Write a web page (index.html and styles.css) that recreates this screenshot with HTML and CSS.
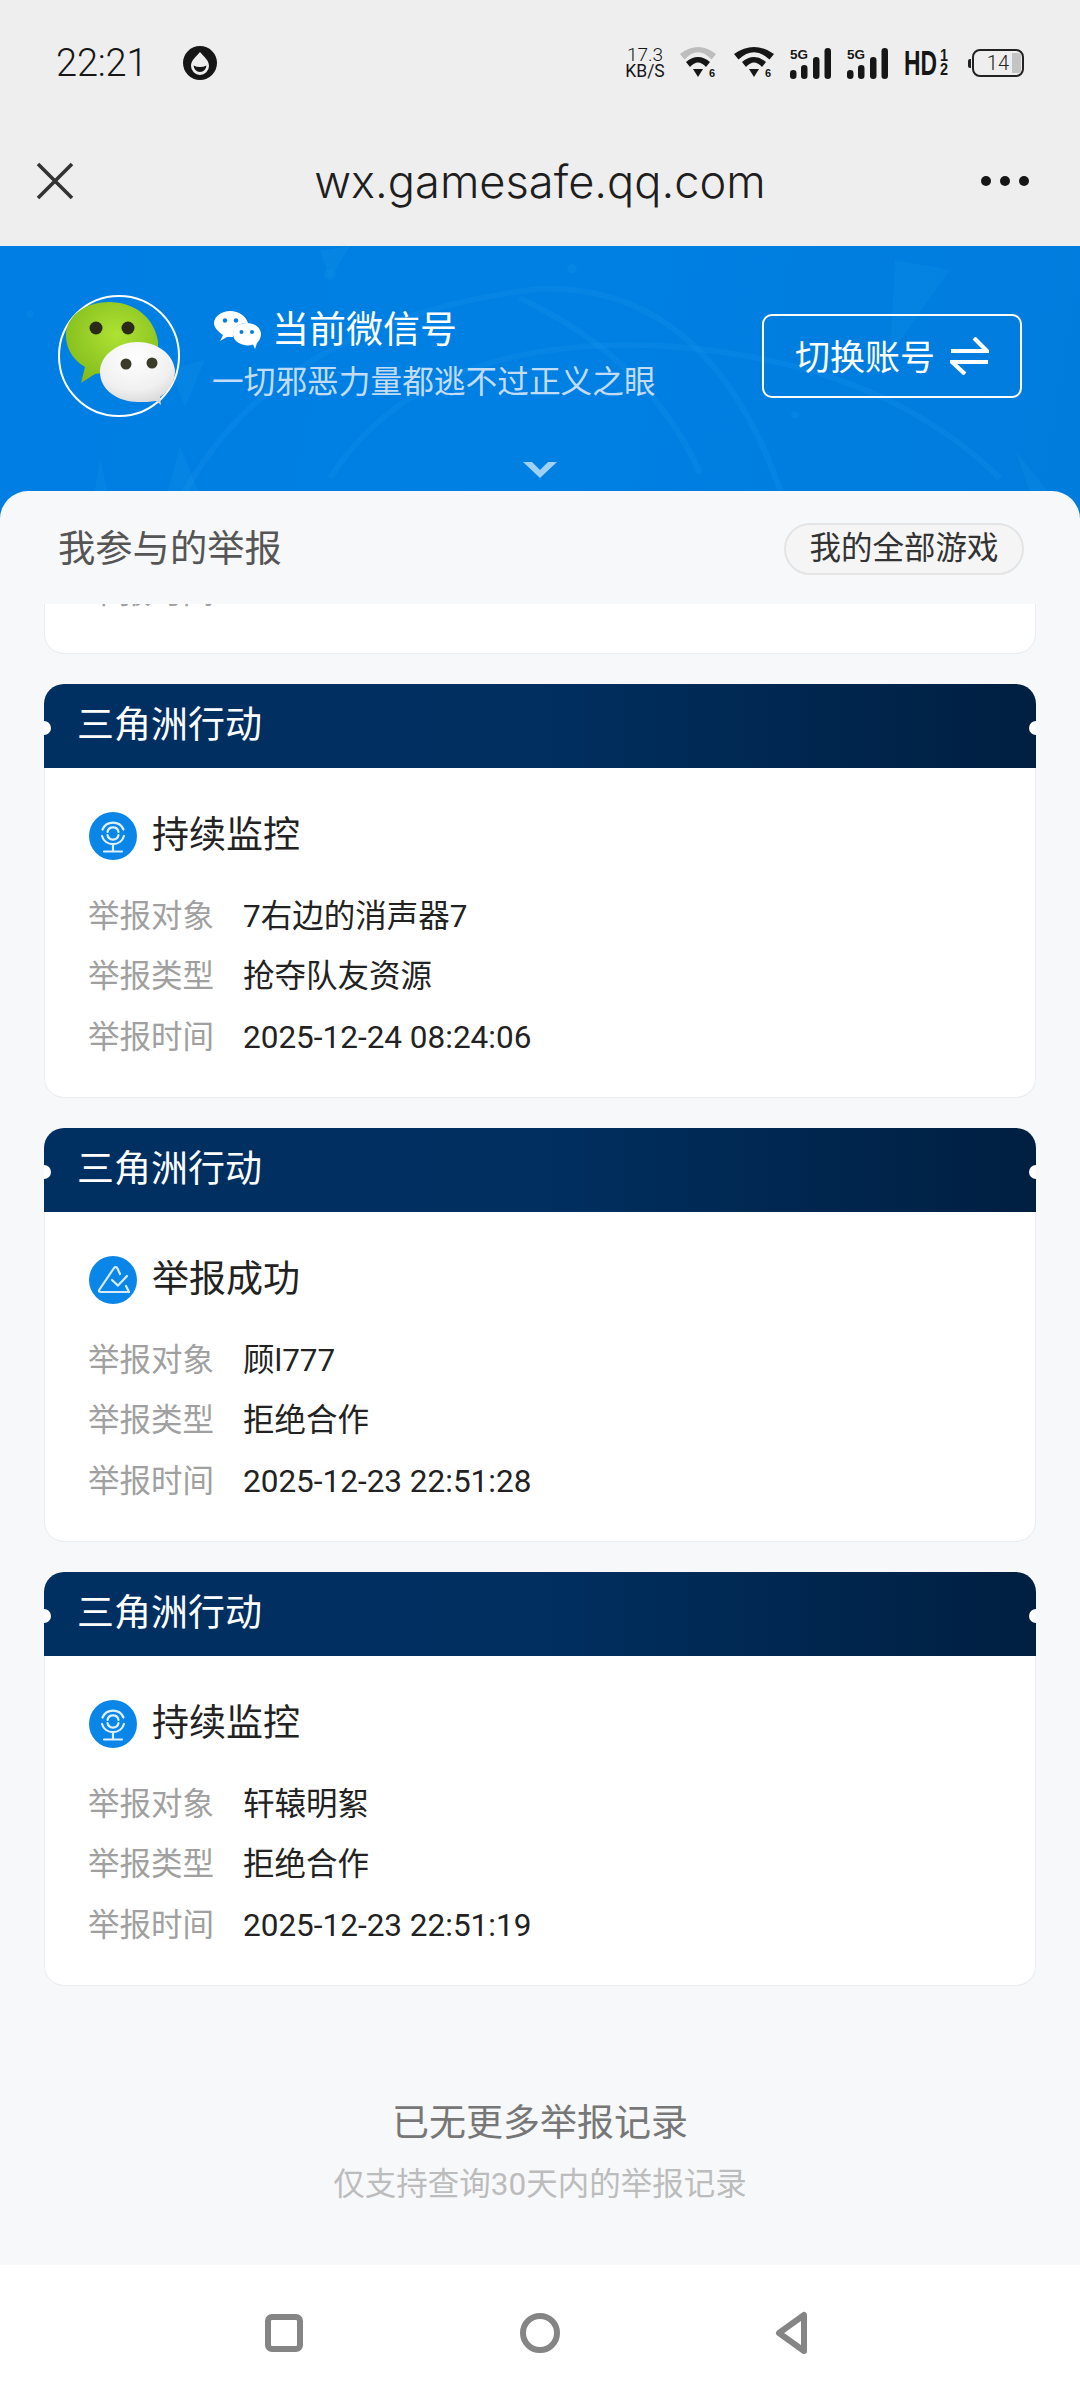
FILE: index.html
```html
<!DOCTYPE html>
<html lang="zh">
<head>
<meta charset="utf-8">
<title>wx.gamesafe.qq.com</title>
<link rel="stylesheet" href="styles.css">
</head>
<body>
<svg class="defs" width="0" height="0" aria-hidden="true">
  <defs>
    <symbol id="wifi-a" viewBox="0 0 40 30">
      <path d="M2 7 Q20 -7 38 7 L33.500 12.500 Q20 -2 6.500 12.500Z" fill="#bdbdbd"/>
      <path d="M8 15 Q20 5 32 15 L28 20 Q20 11 12 20Z" fill="#161616"/>
      <path d="M15 22 H25 L20 30Z" fill="#161616"/>
      <text x="31" y="30" class="tiny6">6</text>
    </symbol>
    <symbol id="wifi-b" viewBox="0 0 40 30">
      <path d="M0 7 Q20 -7 40 7 L35.500 12.500 Q20 -2 4.500 12.500Z" fill="#161616"/>
      <path d="M8 15 Q20 5 32 15 L28 20 Q20 11 12 20Z" fill="#161616"/>
      <path d="M15 22 H25 L20 30Z" fill="#161616"/>
      <text x="31" y="30" class="tiny6">6</text>
    </symbol>
    <symbol id="signal" viewBox="0 0 41 31">
      <text x="0" y="11" class="tiny5g" textLength="18" lengthAdjust="spacingAndGlyphs">5G</text>
      <rect x="0" y="22" width="6.500" height="9" rx="3.200" fill="#161616"/>
      <rect x="11" y="17" width="6.500" height="14" rx="3.200" fill="#161616"/>
      <rect x="23" y="9" width="6.500" height="22" rx="3.200" fill="#161616"/>
      <rect x="34.500" y="0" width="6.500" height="31" rx="3.200" fill="#161616"/>
    </symbol>
    <symbol id="icon-monitor" viewBox="0 0 48 48">
      <circle cx="24" cy="24" r="24" fill="#0a85e8"/>
      <g fill="none" stroke="#dff0fd" stroke-width="2.200" stroke-linecap="round">
        <path d="M13.500 17.500 A11.500 11.500 0 0 1 34.500 17.500"/>
        <path d="M35 24 A11.500 11.500 0 0 1 13 24"/>
        <path d="M18.500 20 A5.600 5.600 0 0 1 29.500 20"/>
        <path d="M29.500 23 A5.600 5.600 0 0 1 18.500 23"/>
        <path d="M24 33 V39 M15 39.500 H33"/>
      </g>
    </symbol>
    <symbol id="icon-success" viewBox="0 0 48 48">
      <circle cx="24" cy="24" r="24" fill="#0a85e8"/>
      <g fill="none" stroke="#d5ebfc" stroke-width="2.200" stroke-linecap="round" stroke-linejoin="round">
        <path d="M40 36 H12 Q9 36 10.500 33.500 L25 12 Q27 10 28.500 12.500 L31 18"/>
        <path d="M40 36 L37 30"/>
        <path d="M23 24 L29 29.600 L38 20"/>
      </g>
    </symbol>
  </defs>
</svg>

<header class="chrome">
  <div class="status">
    <div class="status-left">
      <span class="time">22:21</span>
      <svg class="drop" viewBox="0 0 34 34"><circle cx="17" cy="17" r="17" fill="#161616"/><path d="M17 6 C21 11 26 14 26 20 A9 9 0 0 1 8 20 C8 14 13 11 17 6Z" fill="#eee"/><path d="M10.500 19.500 Q17 22.500 23.500 19.500 Q22.500 26 17 26 Q11.500 26 10.500 19.500Z" fill="#161616"/></svg>
    </div>
    <div class="status-right">
      <div class="speed"><span class="speed-num">17.3</span><span class="speed-unit">KB/S</span></div>
      <svg class="wifi"><use href="#wifi-a"/></svg>
      <svg class="wifi"><use href="#wifi-b"/></svg>
      <svg class="signal"><use href="#signal"/></svg>
      <svg class="signal"><use href="#signal"/></svg>
      <svg class="hd" viewBox="0 -8 45 43">
        <text x="0" y="26" class="hd-text" textLength="33" lengthAdjust="spacingAndGlyphs">HD</text>
        <text x="36" y="11.500" class="hd-small" textLength="8" lengthAdjust="spacingAndGlyphs">1</text>
        <text x="36" y="26" class="hd-small" textLength="8" lengthAdjust="spacingAndGlyphs">2</text>
      </svg>
      <div class="battery"><span class="battery-tip"></span><span class="battery-body"><span class="battery-num">14</span><span class="battery-fill"></span></span></div>
    </div>
  </div>
  <nav class="urlbar">
    <svg class="close" viewBox="0 0 38 38"><path d="M2 2 L36 36 M36 2 L2 36" stroke="#333" stroke-width="3.600" fill="none"/></svg>
    <span class="url">wx.gamesafe.qq.com</span>
    <span class="dots"><i></i><i></i><i></i></span>
  </nav>
</header>

<section class="hero">
  <svg class="hero-bg" viewBox="0 0 1080 290" preserveAspectRatio="none" aria-hidden="true">
    <g fill="none" stroke="#1f9bee" stroke-opacity=".2" stroke-width="6">
      <path d="M330 245 Q420 95 660 105 Q880 120 1000 245"/>
      <path d="M170 290 Q260 80 540 45 Q720 40 790 290"/>
      <path d="M520 55 Q650 120 700 240"/>
    </g>
    <g fill="#1795ea" fill-opacity=".22">
      <path d="M895 15 L950 25 L890 115Z"/>
      <path d="M1015 215 L1060 275 L1040 290Z"/>
      <path d="M170 130 L205 120 L185 170Z"/>
      <path d="M160 290 L180 210 L210 290Z"/>
      <path d="M90 290 L100 225 L115 290Z"/>
      <path d="M320 5 L350 0 L330 35Z"/>
      <circle cx="330" cy="30" r="6"/>
      <circle cx="572" cy="24" r="5"/>
      <circle cx="795" cy="178" r="4"/>
      <circle cx="30" cy="72" r="4"/>
    </g>
  </svg>
  <div class="hero-main">
    <svg class="avatar" viewBox="0 0 122 122">
      <defs>
        <radialGradient id="av-green" cx=".55" cy=".4" r=".7"><stop offset="0" stop-color="#aee233"/><stop offset="1" stop-color="#7fb81a"/></radialGradient>
        <radialGradient id="av-white" cx=".45" cy=".25" r=".85"><stop offset="0" stop-color="#fff"/><stop offset=".6" stop-color="#f0f0f0"/><stop offset="1" stop-color="#cfcfcf"/></radialGradient>
      </defs>
      <circle cx="61" cy="61" r="60" fill="#0080e2" stroke="#fff" stroke-width="2"/>
      <path d="M23 88 L27 72 C13 64 7 50 8 38 C10 19 29 7 51 7 C76 7 96 22 100 46 L100 60 L45 78 L37 79Z" fill="url(#av-green)"/>
      <circle cx="38" cy="33" r="6.500" fill="#2a2a16"/>
      <circle cx="70" cy="33" r="6.500" fill="#2a2a16"/>
      <path d="M98 106 L103 110 L102 102 C114 94 117 84 117 75 C115 58 98 47 80 47 C60 47 42 60 42 77 C42 95 60 107 80 107 C86 107 92 107 98 106Z" fill="url(#av-white)"/>
      <circle cx="68" cy="69" r="5.500" fill="#3b3b2a"/>
      <circle cx="94" cy="68" r="5.500" fill="#3b3b2a"/>
    </svg>
    <div class="hero-text">
      <div class="hero-title">
        <svg class="wx-icon" viewBox="0 0 47 38">
          <path d="M6 30 L9 24 C3 20 0 16 0 12 C0 5 8 0 16 0 C25 0 32 5 34 12 C24 11 18 18 19 26 L13 26Z" fill="#fff"/>
          <circle cx="11" cy="9.500" r="2.200" fill="#0080e2"/><circle cx="22" cy="9.500" r="2.200" fill="#0080e2"/>
          <path d="M41 38 L39 33.500 C35 35 30 34.500 27 33 C21 31 19 26 19 23 C19 16 25 12 33 12 C41 12 47 17 47 23 C47 27 45 30 43 32Z" fill="#fff"/>
          <circle cx="27.500" cy="21" r="2" fill="#0080e2"/><circle cx="38" cy="21" r="2" fill="#0080e2"/>
        </svg>
        <span class="hero-name">当前微信号</span>
      </div>
      <div class="hero-sub">一切邪恶力量都逃不过正义之眼</div>
    </div>
    <button class="switch">
      <span>切换账号</span>
      <svg class="switch-icon" viewBox="0 0 39 38"><path d="M1 14 H37 L24 1 M38 25 H2 L15 37" fill="none" stroke="#fff" stroke-width="4.200" stroke-linejoin="miter"/></svg>
    </button>
  </div>
  <svg class="chevron" viewBox="0 0 34 16"><path d="M0 0 L9 0 L17 8 L25 0 L34 0 L17 16Z" fill="#9fd0f5"/></svg>
</section>

<main class="panel">
  <div class="panel-head">
    <h1 class="panel-title">我参与的举报</h1>
    <span class="pill">我的全部游戏</span>
  </div>
  <div class="list">
    <div class="partial-card"><div class="row partial-row"><span class="label">举报时间</span></div></div>

    <article class="card">
      <div class="card-head">三角洲行动</div>
      <div class="card-body">
        <div class="state"><svg class="state-icon"><use href="#icon-monitor"/></svg><span>持续监控</span></div>
        <div class="row"><span class="label">举报对象</span><span class="value">7右边的消声器7</span></div>
        <div class="row"><span class="label">举报类型</span><span class="value">抢夺队友资源</span></div>
        <div class="row"><span class="label">举报时间</span><span class="value">2025-12-24 08:24:06</span></div>
      </div>
    </article>

    <article class="card">
      <div class="card-head">三角洲行动</div>
      <div class="card-body">
        <div class="state"><svg class="state-icon"><use href="#icon-success"/></svg><span>举报成功</span></div>
        <div class="row"><span class="label">举报对象</span><span class="value">顾l777</span></div>
        <div class="row"><span class="label">举报类型</span><span class="value">拒绝合作</span></div>
        <div class="row"><span class="label">举报时间</span><span class="value">2025-12-23 22:51:28</span></div>
      </div>
    </article>

    <article class="card">
      <div class="card-head">三角洲行动</div>
      <div class="card-body">
        <div class="state"><svg class="state-icon"><use href="#icon-monitor"/></svg><span>持续监控</span></div>
        <div class="row"><span class="label">举报对象</span><span class="value">轩辕明絮</span></div>
        <div class="row"><span class="label">举报类型</span><span class="value">拒绝合作</span></div>
        <div class="row"><span class="label">举报时间</span><span class="value">2025-12-23 22:51:19</span></div>
      </div>
    </article>

    <footer class="list-end">
      <p class="end-main">已无更多举报记录</p>
      <p class="end-sub">仅支持查询30天内的举报记录</p>
    </footer>
  </div>
</main>

<div class="sysnav">
  <svg class="sys-icon" viewBox="0 0 46 46"><rect x="7" y="7" width="32" height="32" rx="4" fill="none" stroke="#858585" stroke-width="6"/></svg>
  <svg class="sys-icon" viewBox="0 0 46 46"><circle cx="23" cy="23" r="17" fill="none" stroke="#858585" stroke-width="6"/></svg>
  <svg class="sys-icon" viewBox="0 0 46 46"><path d="M6 23 L31 5 V41Z" fill="none" stroke="#858585" stroke-width="6" stroke-linejoin="round"/></svg>
</div>
</body>
</html>
```

FILE: styles.css
```css
* { box-sizing: border-box; }

html, body {
  margin: 0;
  padding: 0;
}

body {
  width: 1080px;
  height: 2400px;
  overflow: hidden;
  display: flex;
  flex-direction: column;
  background: #fff;
  font-family: Roboto, "Noto Sans CJK SC", sans-serif;
  color: #222;
}

.defs { display: block; height: 0; }

.tiny6 { font: 700 11px "Liberation Sans", sans-serif; fill: #161616; }
.tiny5g { font: 700 13.500px "Liberation Sans", sans-serif; fill: #161616; }
.hd-text { font: 700 35px "Liberation Sans", sans-serif; fill: #161616; }
.hd-small { font: 700 16px "Liberation Sans", sans-serif; fill: #161616; }

/* Top chrome */
.chrome {
  height: 246px;
  flex: none;
  background: #eeeeee;
  display: flex;
  flex-direction: column;
}

.status {
  height: 126px;
  padding: 45px 56px 0 56px;
  display: flex;
  justify-content: space-between;
  align-items: flex-start;
}

.status-left {
  display: flex;
  align-items: center;
  height: 36px;
  gap: 36px;
}

.time {
  font-size: 38px;
  font-weight: 300;
  letter-spacing: -0.200px;
  color: #161616;
  line-height: 36px;
}

.drop { width: 34px; height: 34px; }

.status-right {
  display: flex;
  align-items: flex-start;
  gap: 16px;
  height: 36px;
}

.speed {
  width: 42px;
  margin-top: 2px;
  margin-right: -4px;
  display: flex;
  flex-direction: column;
  align-items: center;
  color: #161616;
  font-weight: 300;
  font-size: 19px;
  line-height: 16px;
}

.speed-unit { font-size: 17.500px; white-space: nowrap; font-weight: 400; }
.wifi { width: 40px; height: 30px; margin-top: 2px; }
.signal { width: 41px; height: 31px; margin-top: 3px; }
.hd { width: 45px; height: 43px; margin-top: -4px; }

.battery {
  margin-left: 3px;
  display: flex;
  align-items: center;
  height: 28px;
  margin-top: 4px;
}

.battery-tip {
  width: 3px;
  height: 9px;
  background: #222;
  border-radius: 2px 0 0 2px;
  margin-right: 1px;
}

.battery-body {
  width: 52px;
  height: 28px;
  border: 2.500px solid #222;
  border-radius: 8px;
  display: flex;
  align-items: center;
  justify-content: flex-end;
  padding-right: 1px;
  gap: 3px;
}

.battery-num {
  font-size: 20px;
  font-weight: 300;
  line-height: 20px;
  color: #222;
}

.battery-fill {
  width: 9px;
  height: 20px;
  background: #c4c4c4;
  border-radius: 0 3px 3px 0;
}

.urlbar {
  flex: 1;
  display: flex;
  align-items: center;
  padding: 0 51px 10px 36px;
}

.close { width: 38px; height: 38px; margin-top: -1px; }

.url {
  flex: 1;
  text-align: center;
  font-family: Inter, Roboto, sans-serif;
  font-size: 45.200px;
  font-weight: 300;
  color: #1e1e1e;
  margin-left: 25px;
  line-height: 60px;
  padding-top: 2px;
}

.dots {
  display: flex;
  gap: 9px;
  margin-top: -1px;
}

.dots i {
  width: 10px;
  height: 10px;
  border-radius: 50%;
  background: #161616;
}

/* Blue hero */
.hero {
  position: relative;
  height: 275px;
  flex: none;
  overflow: hidden;
  background: linear-gradient(100deg, #007ee3 0%, #0080e3 50%, #007cdd 100%);
}

.hero-bg {
  position: absolute;
  inset: 0;
  width: 100%;
  height: 100%;
}

.hero-main {
  position: relative;
  display: flex;
  align-items: flex-start;
  padding: 49px 58px 0 58px;
}

.avatar { width: 122px; height: 122px; flex: none; }

.hero-text {
  margin-left: 32px;
  margin-top: 16px;
  width: 470px;
}

.hero-title {
  display: flex;
  align-items: center;
  gap: 11px;
  height: 40px;
  margin-left: 2px;
}

.wx-icon { width: 47px; height: 38px; flex: none; margin-top: -2px; }

.hero-name {
  font-size: 37px;
  line-height: 40px;
  color: #fff;
}

.hero-sub {
  font-size: 31.700px;
  line-height: 44px;
  color: #c3dcf6;
  margin-top: 10px;
  white-space: nowrap;
}

.switch {
  width: 260px;
  height: 84px;
  margin-left: auto;
  margin-top: 19px;
  flex: none;
  border: 2.500px solid #fff;
  border-radius: 10px;
  background: transparent;
  color: #fff;
  font-family: inherit;
  font-size: 35px;
  display: flex;
  align-items: center;
  gap: 15px;
  padding: 0 0 3px 31px;
}

.switch-icon { width: 39px; height: 38px; margin-top: 3px; }

.chevron {
  position: absolute;
  left: 523px;
  top: 216px;
  width: 34px;
  height: 16px;
}

/* Panel */
.panel {
  flex: 1;
  margin-top: -30px;
  position: relative;
  background: #f7f8fa;
  border-radius: 28px 28px 0 0;
  display: flex;
  flex-direction: column;
  min-height: 0;
  overflow: hidden;
}

.panel-head {
  height: 113px;
  flex: none;
  display: flex;
  align-items: center;
  justify-content: space-between;
  padding: 0 56px 0 58px;
}

.panel-title {
  margin: 0;
  font-size: 37.300px;
  font-weight: 400;
  color: #555;
  line-height: 50px;
  margin-top: 2px;
}

.pill {
  width: 240px;
  height: 52px;
  border: 2px solid #e4e4e4;
  border-radius: 26px;
  background: #f5f5f5;
  color: #333;
  font-size: 31.500px;
  line-height: 48px;
  text-align: center;
  margin-top: 2px;
}

.list {
  flex: 1;
  padding: 0 44px;
  display: flex;
  flex-direction: column;
  gap: 30px;
  overflow: hidden;
}

.partial-card {
  height: 50px;
  flex: none;
  overflow: hidden;
  background: #fff;
  border: 1px solid #eaecf0;
  border-top: 0;
  border-radius: 0 0 20px 20px;
  padding-left: 43px;
}

.partial-row { margin-top: -43px; }

.card {
  flex: none;
  height: 414px;
  display: flex;
  flex-direction: column;
  background: #fff;
  border-radius: 20px;
}

.card-head {
  position: relative;
  height: 84px;
  flex: none;
  overflow: hidden;
  padding-left: 33px;
  border-radius: 20px 20px 0 0;
  background: linear-gradient(90deg, #003061 0%, #002f60 50%, #001f41 100%);
  color: #fff;
  font-size: 37px;
  line-height: 84px;
}

.card-head::before,
.card-head::after {
  content: "";
  position: absolute;
  top: 37px;
  width: 14px;
  height: 14px;
  border-radius: 50%;
  background: #fff;
}

.card-head::before { left: -7px; }
.card-head::after { right: -7px; }

.card-body {
  flex: 1;
  padding: 40px 44px 0 43px;
  border: 1px solid #eaecf0;
  border-top: 0;
  border-radius: 0 0 20px 20px;
}

.state {
  display: flex;
  align-items: center;
  height: 54px;
  gap: 15px;
  font-size: 37px;
  color: #222;
  margin-bottom: 23px;
  padding-left: 1px;
}

.state span { line-height: 50px; margin-top: 2px; }

.state-icon { width: 48px; height: 48px; flex: none; margin-top: 2px; }

.row {
  display: flex;
  align-items: center;
  height: 60.500px;
  padding-top: 3px;
  font-size: 31.500px;
  line-height: 44px;
}

.label {
  width: 155px;
  flex: none;
  color: #a0a0a0;
}

.value { color: #222; white-space: nowrap; }

/* End of list */
.list-end {
  margin-top: 78px;
  text-align: center;
}

.end-main {
  margin: 0;
  font-size: 37px;
  line-height: 60px;
  color: #777;
}

.end-sub {
  margin: 1px 0 0;
  font-size: 31.500px;
  line-height: 60px;
  color: #bcbcbc;
}

/* System navigation */
.sysnav {
  height: 135px;
  flex: none;
  background: #fff;
  display: flex;
  align-items: center;
  justify-content: space-between;
  padding: 0 261px;
}

.sys-icon { width: 46px; height: 46px; }
```
